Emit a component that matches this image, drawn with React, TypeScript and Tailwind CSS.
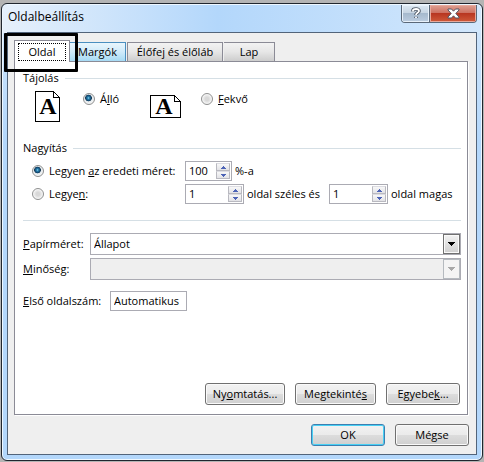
import React, { useState } from 'react';

const tabs = ['Oldal', 'Margók', 'Élőfej és élőláb', 'Lap'];

const tabStyles: Record<string, string> = {
  Oldal: 'w-14 h-[22px] bg-white border-x border-t border-[#8b8b96] z-10',
  Margók: 'w-14 h-[19px] border-r border-t border-[#4a8fc0] bg-linear-to-b from-[#e9f6fd] via-[#cfeafa] to-[#a6daf4]',
  'Élőfej és élőláb': 'w-24 h-[19px] border-x border-t border-[#8b8b96] bg-linear-to-b from-[#f3f3f3] via-[#e6e6e6] to-[#cdcdcd]',
  Lap: 'w-[51px] h-[19px] border-r border-t border-[#8b8b96] bg-linear-to-b from-[#f3f3f3] via-[#e6e6e6] to-[#cdcdcd]',
};

const App: React.FC = () => {
  const [tab, setTab] = useState('Oldal');
  const [orientation, setOrientation] = useState('portrait');
  const [scaling, setScaling] = useState('percent');

  return (
    <div className="min-h-screen flex flex-col bg-[#b4b4b4] pt-[3px] px-px pb-px font-['Open_Sans','Noto_Sans',sans-serif] text-[11px] leading-4 text-black">
      <div className="relative flex-1 flex flex-col rounded-md border border-[#20262e] bg-linear-to-b from-[#d3e7fb] to-[#b3d7fb] to-30% px-[5px] pb-[5px] shadow-[inset_0_0_0_1px_#eef7ff]">
        <header className="h-7 flex items-start justify-between -mx-1 mt-px -mb-px pl-[5px] pr-1 rounded-t bg-linear-to-r from-[#e6f0fb] via-[#b3d7fb] via-45% to-[#d2e7fc]">
          <h1 className="text-[12px] leading-6">Oldalbeállítás</h1>
          <div className="flex h-[18px] rounded-b border border-t-0 border-[#5a6878] overflow-hidden">
            <button aria-label="Súgó" className="w-7 flex items-center justify-center border-r border-[#5a6878] bg-[linear-gradient(#dce8f3,#c5d3e1_50%,#a6b9cd_50%,#bccde0)] shadow-[inset_0_0_0_1px_#e8f1fa]">
              <HelpIcon />
            </button>
            <button aria-label="Bezárás" className="w-[46px] flex items-center justify-center bg-[linear-gradient(#dfa193,#cd7263_45%,#b83621_50%,#cf5a3a)] shadow-[inset_0_0_0_1px_#e7a99c]">
              <CloseIcon />
            </button>
          </div>
        </header>

        <main className="flex-1 flex flex-col border border-[#52647a] bg-[#efefef] pt-[7px] pl-1.5 pr-[7px] pb-2">
          <div role="tablist" className="flex items-end h-[22px] -mb-px">
            {tabs.map(t => (
              <button
                key={t}
                role="tab"
                aria-selected={tab === t}
                onClick={() => setTab(t)}
                className={`relative shrink-0 flex items-center justify-center whitespace-nowrap mb-px first:mb-0 nth-[3]:ml-px nth-[4]:ml-px ${tabStyles[t]}`}
              >
                {tab === t ? <span className="border border-dotted border-black w-12">{t}</span> : t}
              </button>
            ))}
          </div>

          <form onSubmit={e => e.preventDefault()} className="flex-1 flex flex-col mr-px border border-[#8b8b96] bg-white pt-2 pl-2 pr-1.5 pb-[9px] shadow-[1px_1px_0_#ffffff]">
            <SectionTitle title="Tájolás" />
            <div className="flex items-start mt-[5px] pl-3 h-8">
              <PortraitIcon />
              <Radio name="orientation" className="ml-[23px] w-[67px]" checked={orientation === 'portrait'} onChange={() => setOrientation('portrait')}>
                Á<u>l</u>ló
              </Radio>
              <LandscapeIcon />
              <Radio name="orientation" className="ml-5" checked={orientation === 'landscape'} onChange={() => setOrientation('landscape')}>
                <u>F</u>ekvő
              </Radio>
            </div>

            <SectionTitle title="Nagyítás" className="mt-[17px]" />
            <div className="flex flex-col gap-[3px] mt-[5px] pl-[9px]">
              <div className="flex items-center">
                <Radio name="scaling" className="w-[153px]" checked={scaling === 'percent'} onChange={() => setScaling('percent')}>
                  Legyen <u>a</u>z eredeti méret:
                </Radio>
                <Spinner label="Méret százalékban" initial={100} className="w-[47px]" />
                <span className="ml-[3px]">%-a</span>
              </div>
              <div className="flex items-center">
                <Radio name="scaling" className="w-[153px]" checked={scaling === 'fit'} onChange={() => setScaling('fit')}>
                  Legye<u>n</u>:
                </Radio>
                <Spinner label="Oldal széles" initial={1} className="w-[59px]" />
                <span className="ml-[3px] w-[82px] whitespace-nowrap">oldal széles és</span>
                <Spinner label="Oldal magas" initial={1} className="w-[59px]" />
                <span className="ml-[3px] whitespace-nowrap">oldal magas</span>
              </div>
            </div>

            <hr className="border-[#d5dfe5] mt-4" />

            <div className="flex items-center mt-3">
              <label htmlFor="paper" className="w-[67px] shrink-0"><u>P</u>apírméret:</label>
              <Dropdown id="paper" options={['Állapot', 'A4', 'A3', 'Letter']} />
            </div>
            <div className="flex items-center mt-[3px]">
              <label htmlFor="quality" className="w-[67px] shrink-0"><u>M</u>inőség:</label>
              <Dropdown id="quality" options={['']} disabled />
            </div>
            <div className="flex items-center mt-[11px]">
              <label htmlFor="first" className="w-[87px] shrink-0"><u>E</u>lső oldalszám:</label>
              <input id="first" defaultValue="Automatikus" className="w-[77px] h-5 border border-[#ababb3] px-[3px] pb-0.5" />
            </div>

            <div className="flex justify-end gap-2.5 mt-auto pt-4 pr-px">
              <DialogButton className="w-20">Ny<u>o</u>mtatás...</DialogButton>
              <DialogButton className="w-[81px]">Megtekinté<u>s</u></DialogButton>
              <DialogButton className="w-[74px]">Egyebe<u>k</u>...</DialogButton>
            </div>
          </form>

          <footer className="flex justify-end gap-2.5 mt-[9px]">
            <DialogButton primary className="w-[74px]">OK</DialogButton>
            <DialogButton className="w-[74px]">Mégse</DialogButton>
          </footer>
        </main>

        <div className="absolute left-[2px] top-[29px] w-[74px] h-[39px] rounded-[1px] border-[3px] border-black z-20 pointer-events-none" />
      </div>
    </div>
  );
};

export default App;

const SectionTitle: React.FC<{ title: string; className?: string }> = ({ title, className = '' }) => (
  <div className={`flex items-center gap-1.5 ${className}`}>
    <h2>{title}</h2>
    <div className="flex-1 h-px bg-[#d5dfe5]" />
  </div>
);

interface RadioProps {
  name: string;
  checked: boolean;
  onChange: () => void;
  className?: string;
  children: React.ReactNode;
}

const Radio: React.FC<RadioProps> = ({ name, checked, onChange, className = '', children }) => (
  <label className={`flex items-center gap-[5px] shrink-0 whitespace-nowrap ${className}`}>
    <input
      type="radio"
      name={name}
      checked={checked}
      onChange={onChange}
      className="appearance-none w-3 h-3 shrink-0 rounded-full border border-[#8e8f8f] bg-[radial-gradient(circle,#d8d8d8_25%,#e9e9e9_50%,#fafafa_70%)] checked:bg-[radial-gradient(circle_at_45%_40%,#9be0f5_0,#2c86b5_1px,#0c3c63_3px,#12324d_35%,#e4eaee_45%,#f4f4f4_70%)]"
    />
    <span>{children}</span>
  </label>
);

const Spinner: React.FC<{ label: string; initial: number; className: string }> = ({ label, initial, className }) => {
  const [value, setValue] = useState(initial);
  const arrow = 'w-[14px] flex-1 flex items-center justify-center border border-t-[#dcdce2] border-[#b9b9c0] bg-linear-to-b from-[#f8f8f8] to-[#e2e2e6]';

  return (
    <div className={`flex h-5 shrink-0 border border-[#ababb3] bg-white p-px ${className}`}>
      <input
        aria-label={label}
        value={value}
        onChange={e => setValue(Number(e.target.value) || 0)}
        className="min-w-0 flex-1 pl-0.5"
      />
      <div className="flex flex-col">
        <button type="button" aria-label="Növelés" onClick={() => setValue(value + 1)} className={arrow}>
          <svg width="5" height="3" viewBox="0 0 5 3" shapeRendering="crispEdges"><path d="M2 0h1v1h1v1h1v1H0V2h1V1h1z" fill="#4c63b6" /></svg>
        </button>
        <button type="button" aria-label="Csökkentés" onClick={() => setValue(value - 1)} className={arrow}>
          <svg width="5" height="3" viewBox="0 0 5 3" shapeRendering="crispEdges"><path d="M0 0h5v1H4v1H3v1H2V2H1V1H0z" fill="#4c63b6" /></svg>
        </button>
      </div>
    </div>
  );
};

const Dropdown: React.FC<{ id: string; options: string[]; disabled?: boolean }> = ({ id, options, disabled }) => (
  <div className="relative flex-1 h-[22px]">
    <select id={id} disabled={disabled} className="appearance-none w-full h-full border border-[#ababb3] bg-white disabled:bg-[#efefef] disabled:opacity-100 pl-[3px] pr-5">
      {options.map(o => <option key={o}>{o}</option>)}
    </select>
    <span className={`absolute right-px top-px bottom-px w-[17px] flex items-center justify-center border pointer-events-none ${disabled ? 'border-[#b5babf] bg-[#f4f4f4]' : 'border-[#707070] bg-linear-to-b from-[#f2f2f2] to-[#cfcfcf] shadow-[inset_0_0_0_1px_#fafafa]'}`}>
      <svg width="7" height="4" viewBox="0 0 7 4" shapeRendering="crispEdges"><path d="M0 0h7v1H6v1H5v1H4v1H3V3H2V2H1V1H0z" fill={disabled ? '#a8a8a8' : '#000'} /></svg>
    </span>
  </div>
);

const DialogButton: React.FC<{ primary?: boolean; className: string; children: React.ReactNode }> = ({ primary, className, children }) => (
  <button
    type="button"
    className={`h-[22px] rounded-[3px] border whitespace-nowrap bg-[linear-gradient(#f2f2f2,#ebebeb_50%,#dddddd_50%,#cfcfcf)] ${primary ? 'border-[#3c7fb1] shadow-[inset_0_0_0_1px_#48d0f4]' : 'border-[#707070] shadow-[inset_0_0_0_1px_#fafafa]'} ${className}`}
  >
    {children}
  </button>
);

const LetterA: React.FC<{ x: number; y: number }> = ({ x, y }) => (
  <text x={x} y={y} textAnchor="middle" fill="#000" stroke="none" className="font-['Liberation_Serif',serif] font-bold text-[24px]">A</text>
);

const PortraitIcon = () => (
  <svg width="25" height="31" viewBox="0 0 25 31" fill="none" stroke="#000" shapeRendering="crispEdges" className="shrink-0 overflow-visible">
    <path d="M.5 .5h18l6 6v24H.5z" />
    <path d="M18.5 .5v6h6" />
    <LetterA x={13} y={23} />
  </svg>
);

const LandscapeIcon = () => (
  <svg width="31" height="23" viewBox="0 0 31 23" fill="none" stroke="#000" shapeRendering="crispEdges" className="mt-1 shrink-0 overflow-visible">
    <path d="M.5 .5h24l6 6v16H.5z" />
    <path d="M24.5 .5v6h6" />
    <LetterA x={14} y={19} />
  </svg>
);

const HelpIcon = () => (
  <svg width="10" height="13" viewBox="0 0 10 13" fill="none" strokeLinejoin="round">
    <path d="M2 4.5V3.6C2 2.4 3.2 2 5 2s3 .6 3 2c0 1.8-3 1.8-3 4M5 9.8v1.2" stroke="#4d5663" strokeWidth="3.6" />
    <path d="M2 4.5V3.6C2 2.4 3.2 2 5 2s3 .6 3 2c0 1.8-3 1.8-3 4M5 9.8v1.2" stroke="#fff" strokeWidth="1.8" />
  </svg>
);

const CloseIcon = () => (
  <svg width="13" height="11" viewBox="0 0 13 11">
    <path d="M1 1h3.5l2 2.2L8.5 1H12v1L8.8 5.5 12 9v1H8.5l-2-2.2L4.5 10H1V9l3.2-3.5L1 2z" fill="#fff" stroke="#535666" />
  </svg>
);
